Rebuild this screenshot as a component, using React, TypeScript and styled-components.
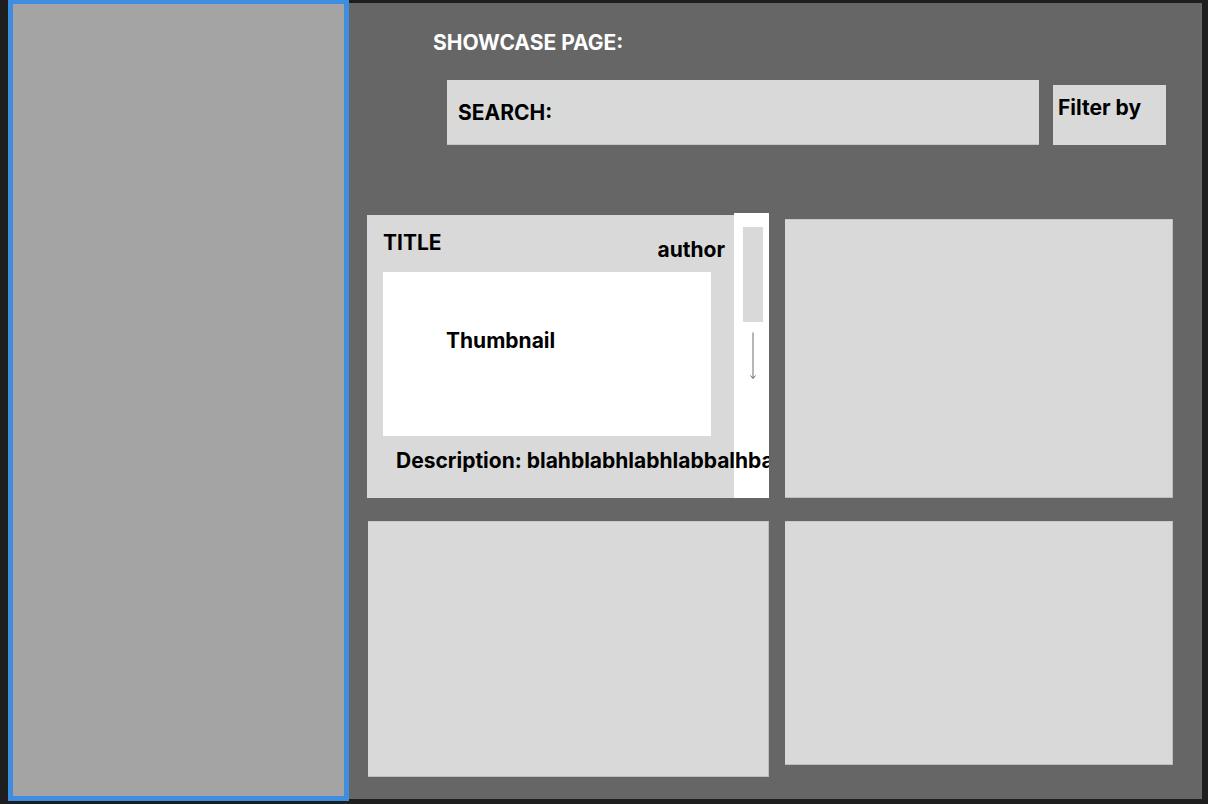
import React from "react";
import styled, { createGlobalStyle } from "styled-components";

const Global = createGlobalStyle`
  html, body { margin: 0; padding: 0; background: #1e1e1e; }
  body { font-family: Inter, "Liberation Sans", sans-serif; }
`;

const Screen = styled.div`
  display: flex;
  align-items: flex-start;
  width: 1208px;
  height: 804px;
  padding: 0 6px 0 8px;
  box-sizing: border-box;
  background: #1e1e1e;
  overflow: hidden;
`;

const Sidebar = styled.aside`
  flex: 0 0 341px;
  height: 801px;
  box-sizing: border-box;
  border: 5px solid #3f8de0;
  border-top-width: 4px;
  background: #a4a4a4;
`;

const Main = styled.main`
  flex: 1;
  height: 796px;
  margin-top: 3px;
  background: #666666;
  padding: 28px 0 0 18px;
  box-sizing: border-box;
  font-weight: 700;
  color: #000;
`;

const PageTitle = styled.h1`
  margin: 0 0 25px 66px;
  font-size: 21px;
  line-height: 24px;
  font-weight: 700;
  color: #ffffff;
`;

const SearchRow = styled.div`
  display: flex;
  align-items: flex-end;
  gap: 14px;
  margin-left: 80px;
`;

const SearchBar = styled.div`
  width: 592px;
  height: 65px;
  background: #d9d9d9;
  border-bottom: 1px solid #c4c4c4;
  box-sizing: border-box;
  display: flex;
  align-items: center;
  padding: 1px 0 0 11px;
  font-size: 21px;
`;

const FilterBox = styled.div`
  width: 113px;
  height: 60px;
  background: #d9d9d9;
  box-sizing: border-box;
  padding: 11px 0 0 5px;
  font-size: 21px;
  line-height: 24px;
`;

const Grid = styled.div`
  display: grid;
  grid-template-columns: 402px 388px;
  column-gap: 16px;
  row-gap: 23px;
  margin-top: 68px;
  align-items: start;
`;

const Card = styled.div<{ $h: number; $top?: number; $left?: number }>`
  height: ${(p) => p.$h}px;
  margin-top: ${(p) => p.$top ?? 0}px;
  margin-left: ${(p) => p.$left ?? 0}px;
  background: #d9d9d9;
  box-shadow: inset -1px -1px 0 #bdbdbd, inset 0 1px 0 #c8c8c8;
`;

const FeaturedCard = styled.div`
  display: flex;
  height: 285px;
  overflow: hidden;
`;

const CardBody = styled.div`
  flex: 0 0 367px;
  min-width: 0;
  height: 283px;
  margin-top: 2px;
  background: #d9d9d9;
  box-sizing: border-box;
  padding: 16px 0 0 16px;
  display: flex;
  flex-direction: column;
`;

const CardHead = styled.div`
  display: flex;
  justify-content: space-between;
  align-items: flex-start;
  width: 342px;
  height: 41px;
`;

const CardTitle = styled.span`
  font-size: 21px;
  line-height: 24px;
`;

const Author = styled.span`
  font-size: 21px;
  line-height: 24px;
  margin-top: 7px;
`;

const Thumb = styled.div`
  width: 328px;
  height: 164px;
  flex: 0 0 auto;
  background: #ffffff;
  box-sizing: border-box;
  padding: 57px 0 0 63px;
  font-size: 21px;
  line-height: 24px;
`;

const Description = styled.div`
  position: relative;
  z-index: 1;
  margin: 13px 0 0 13px;
  white-space: nowrap;
  font-size: 21px;
  line-height: 24px;
`;

const ScrollColumn = styled.div`
  flex: 0 0 35px;
  height: 285px;
  background: #ffffff;
  box-sizing: border-box;
  padding: 14px 0 0 9px;
  display: flex;
  flex-direction: column;
`;

const ScrollThumb = styled.div`
  width: 20px;
  height: 95px;
  background: #d9d9d9;
`;

const ArrowIcon = styled.svg`
  display: block;
  margin: 10px 0 0 5px;
`;

export default function App() {
  return (
    <>
      <Global />
      <Screen>
        <Sidebar />
        <Main>
          <PageTitle>SHOWCASE PAGE:</PageTitle>
          <SearchRow>
            <SearchBar>SEARCH:</SearchBar>
            <FilterBox>Filter by</FilterBox>
          </SearchRow>
          <Grid>
            <FeaturedCard>
              <CardBody>
                <CardHead>
                  <CardTitle>TITLE</CardTitle>
                  <Author>author</Author>
                </CardHead>
                <Thumb>Thumbnail</Thumb>
                <Description>Description: blahblabhlabhlabbalhbalhablah</Description>
              </CardBody>
              <ScrollColumn>
                <ScrollThumb />
                <ArrowIcon width="10" height="48" viewBox="0 0 10 48">
                  <line x1="5" y1="0.5" x2="5" y2="46" stroke="#6e6e6e" strokeWidth="1" />
                  <path d="M2.5 43.5 L5 46.5 L7.5 43.5" fill="none" stroke="#444" strokeWidth="0.8" />
                </ArrowIcon>
              </ScrollColumn>
            </FeaturedCard>
            <Card $h={279} $top={6} />
            <Card $h={256} $left={1} />
            <Card $h={244} />
          </Grid>
        </Main>
      </Screen>
    </>
  );
}
